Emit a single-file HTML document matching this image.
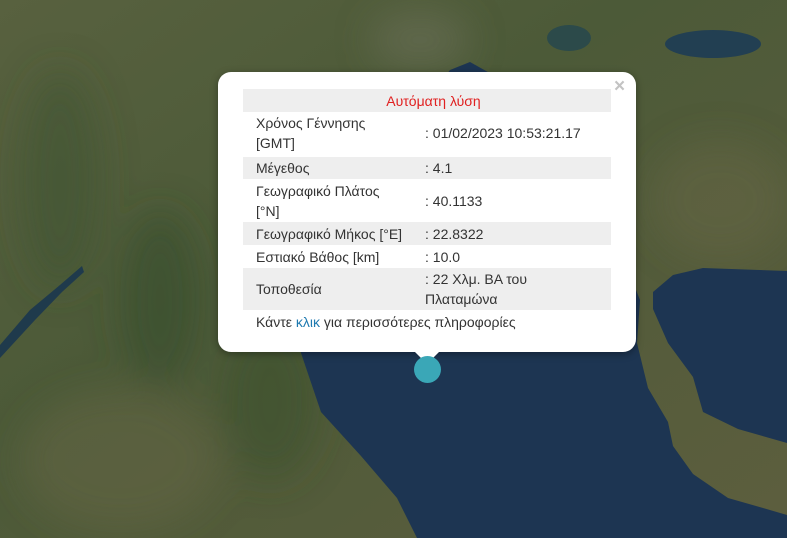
<!DOCTYPE html>
<html><head><meta charset="utf-8"><style>
html,body{margin:0;padding:0;width:787px;height:538px;overflow:hidden;font-family:"Liberation Sans","DejaVu Sans",sans-serif}
.map{position:absolute;left:0;top:0}
.pop{position:absolute;left:218px;top:72px;width:418px;height:280px;background:#fff;border-radius:13px;box-shadow:0 2px 8px rgba(0,0,0,.35)}
.tip{position:absolute;left:414px;top:351px;width:0;height:0;border-left:13px solid transparent;border-right:13px solid transparent;border-top:13px solid #fff}
.close{position:absolute;left:614px;top:76px;color:#c3c3c3;font-size:19px;font-weight:bold}
table{position:absolute;left:243px;top:89px;width:368px;border-collapse:collapse;font-size:14px;color:#333;table-layout:fixed}
td{padding:0 0 0 13px;line-height:20px;vertical-align:middle}
td.v{padding-left:0}
tr.g td{background:#eeeeee}
.h{text-align:center;color:#e02020;height:23px}
.foot{position:absolute;left:256px;top:314px;font-size:14px;color:#333}
.foot span{color:#1f7ab0}
.dot{position:absolute;left:414px;top:356px;width:27px;height:27px;border-radius:50%;background:#3aa7b7}
</style></head><body>
<svg class="map" width="787" height="538" viewBox="0 0 787 538">
<defs>
<linearGradient id="l" x1="0" y1="0" x2="1" y2="1">
<stop offset="0" stop-color="#58613f"/><stop offset=".4" stop-color="#4c5a38"/><stop offset="1" stop-color="#5d5e3e"/></linearGradient>
<filter id="b"><feGaussianBlur stdDeviation="18"/></filter>
</defs>
<rect width="787" height="538" fill="url(#l)"/>
<g filter="url(#b)">
<ellipse cx="60" cy="180" rx="40" ry="110" fill="#3e5430" opacity=".5"/>
<ellipse cx="160" cy="300" rx="40" ry="90" fill="#2f4a2a" opacity=".5"/>
<ellipse cx="270" cy="400" rx="50" ry="80" fill="#3a4d2e" opacity=".5"/>
<ellipse cx="120" cy="460" rx="100" ry="70" fill="#706a4a" opacity=".35"/>
<ellipse cx="720" cy="200" rx="70" ry="60" fill="#6d6a48" opacity=".35"/>
<ellipse cx="420" cy="40" rx="50" ry="30" fill="#7a7a6a" opacity=".35"/>
</g>
<polygon fill="#1d3552" points="301,353 321,412 361,456 397,498 417,538 787,538 787,515 763,508 728,498 693,474 673,446 668,422 648,388 637,343 640,300 600,200 520,90 470,62 450,70 420,110 330,240 300,330"/>
<polygon fill="#1d3552" points="653,309 653,292 673,275 703,268 787,271 787,443 738,429 703,412 693,377 668,343"/>
<ellipse cx="569" cy="38" rx="22" ry="13" fill="#2c4a4a"/>
<ellipse cx="713" cy="44" rx="48" ry="14" fill="#223f52"/>
<path d="M0,345 L30,310 L60,285 L82,266 L84,272 L62,292 L35,320 L0,358 Z" fill="#1f3a4c"/>
</svg>
<div class="pop"></div>
<div class="tip"></div>
<div class="close">×</div>
<table>
<colgroup><col style="width:182px"><col style="width:186px"></colgroup>
<tr class="g"><td colspan="2" class="h">Αυτόματη λύση</td></tr>
<tr><td style="height:42px">Χρόνος Γέννησης<br>[GMT]</td><td class="v">: 01/02/2023 10:53:21.17</td></tr>
<tr><td style="height:3px" colspan="2"></td></tr>
<tr class="g"><td style="height:22px">Μέγεθος</td><td class="v">: 4.1</td></tr>
<tr><td style="height:43px">Γεωγραφικό Πλάτος<br>[°N]</td><td class="v">: 40.1133</td></tr>
<tr class="g"><td style="height:23px">Γεωγραφικό Μήκος [°E]</td><td class="v">: 22.8322</td></tr>
<tr><td style="height:23px">Εστιακό Βάθος [km]</td><td class="v">: 10.0</td></tr>
<tr class="g"><td style="height:42px">Τοποθεσία</td><td class="v">: 22 Χλμ. ΒΑ του<br>Πλαταμώνα</td></tr>
</table>
<div class="foot">Κάντε <span>κλικ</span> για περισσότερες πληροφορίες</div>
<div class="dot"></div>
</body></html>
